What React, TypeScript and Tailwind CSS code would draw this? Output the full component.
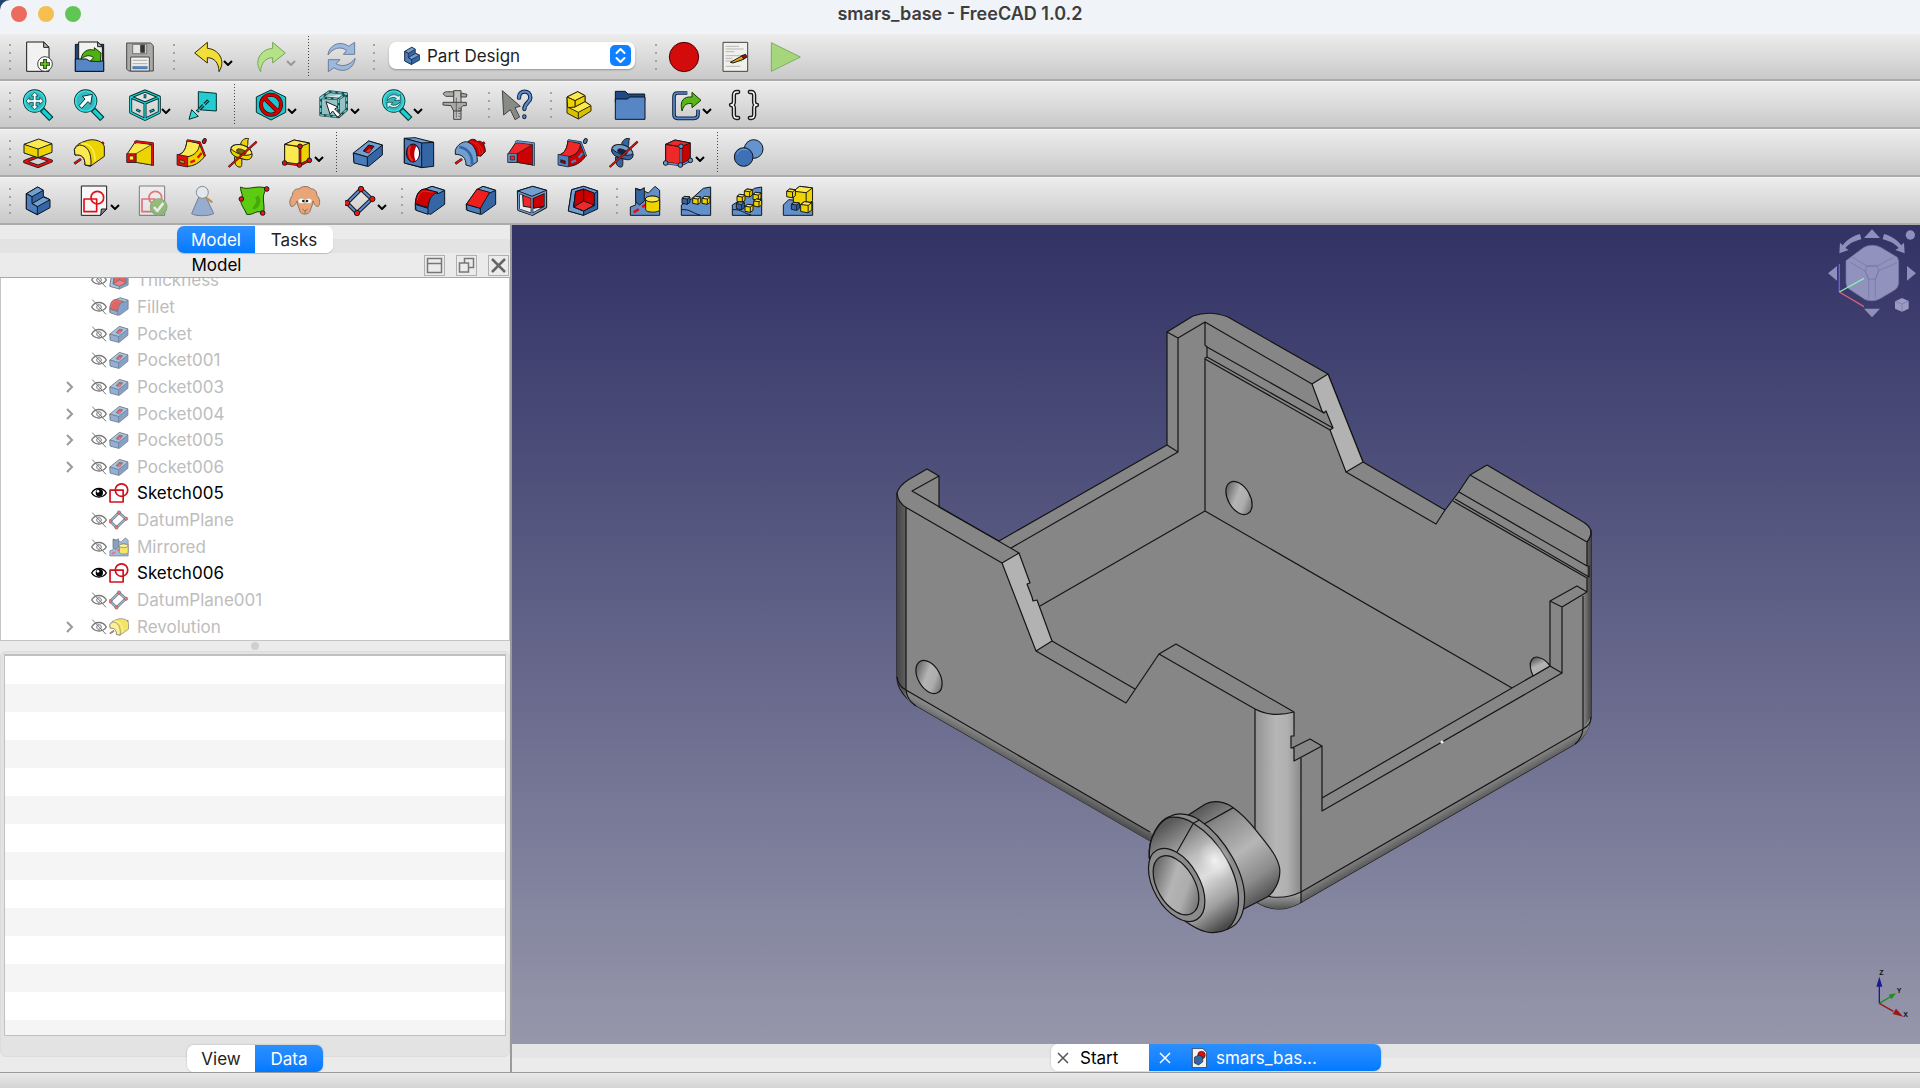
import React, { useState } from 'react';
import { Braces } from 'lucide-react';

type Tone = { base: string; light: string; dark: string };

const BLUE: Tone = { base: '#3465a4', light: '#729fcf', dark: '#1f4479' };
const YELLOW: Tone = { base: '#edd400', light: '#fce94f', dark: '#c4a000' };
const RED: Tone = { base: '#cc0000', light: '#ef2929', dark: '#8f0000' };
const INK = '#1a1a1a';

const Glyph: React.FC<{ children: React.ReactNode; size?: string }> = ({ children, size = 'size-8' }) => (
  <svg viewBox="0 0 96 96" className={`${size} shrink-0`} stroke={INK} strokeWidth="3" strokeLinejoin="round" fill="none" aria-hidden="true">
    {children}
  </svg>
);

/* ---------- shared icon parts ---------- */

const Body = () => (
  <g stroke="#0b1521">
    <path d="M13 26L47 6L64 16V34L84 44V68L46 89L13 72z" fill={BLUE.base} />
    <path d="M13 26L47 6L64 16L30 35z" fill={BLUE.light} />
    <path d="M30 56L64 36L84 44L46 65z" fill={BLUE.light} />
    <path d="M13 26L30 35V56L46 65V89L13 72z" fill="#4d7fbd" />
  </g>
);

const Stairs = () => (
  <g stroke="#302b00">
    <path d="M12 24L44 8L66 20V38L84 50V66L46 90L12 72z" fill="#d9c000" />
    <path d="M12 24L44 8L66 20L36 35z" fill={YELLOW.light} />
    <path d="M36 35L66 20V38L36 54z" fill={YELLOW.base} />
    <path d="M14 54L36 54L66 38L84 50L46 70z" fill={YELLOW.light} />
    <path d="M12 24L36 35V54L14 56z" fill={YELLOW.base} />
    <path d="M46 70V90" />
  </g>
);

const Lens = () => (
  <g>
    <path d="M60 62L88 90" stroke="#04302f" strokeWidth="18" />
    <path d="M62 64L86 88" stroke="#16d0d2" strokeWidth="11" />
    <circle cx="38" cy="36" r="30" fill="#a9ecec" stroke="#04302f" strokeWidth="10" />
    <circle cx="38" cy="36" r="30" fill="#37b7bd" stroke="#34e0e2" strokeWidth="5" />
  </g>
);

const CubeFrame = () => (
  <g>
    <path d="M48 6L91 24V70L48 91L5 70V24zM5 24L48 42L91 24M48 42V91" stroke="#04302f" strokeWidth="9" />
    <path d="M48 6L91 24V70L48 91L5 70V24zM5 24L48 42L91 24M48 42V91" stroke="#22d4d7" strokeWidth="4" />
  </g>
);

const Loft: React.FC<{ fill: Tone; edge: string }> = ({ fill, edge }) => (
  <g>
    <path d="M10 50L34 14L84 22V84L38 76L10 76z" fill={fill.light} />
    <path d="M36 50L84 22V84L36 76z" fill={fill.base} strokeWidth="2" />
    <path d="M32 18L36 14L86 20V86" stroke={INK} strokeWidth="8" />
    <path d="M32 18L36 14L86 20V86" stroke={edge} strokeWidth="5" />
    <path d="M8 50H36V76H8z" fill={edge} strokeWidth="2" />
    <path d="M16 57H29V69H16z" fill={fill.light} strokeWidth="2" />
  </g>
);

const Pipe: React.FC<{ fill: Tone; edge: string }> = ({ fill, edge }) => (
  <g>
    <path d="M8 54C28 50 34 30 36 10L74 20L90 56C76 78 54 88 36 88L10 84z" fill={fill.base} />
    <path d="M8 54C28 50 34 30 36 10L74 20C72 40 62 54 36 60z" fill={fill.light} />
    <path d="M36 10L74 16L90 58" stroke={INK} strokeWidth="7" />
    <path d="M36 10L74 16L90 58" stroke={edge} strokeWidth="4" />
    <path d="M6 52L38 58V90L6 84z" fill={edge} strokeWidth="2" />
    <path d="M14 68L28 72V80L14 76z" fill={fill.dark} strokeWidth="2" />
    <path d="M46 76L60 70M68 62L80 48" stroke={edge} strokeWidth="7" />
    <ellipse cx="88" cy="12" rx="5" ry="8" fill={edge} transform="rotate(25 88 12)" />
  </g>
);

const Helix: React.FC<{ fill: Tone; dark: string }> = ({ fill, dark }) => (
  <g>
    <path d="M44 22C46 8 58 2 68 5C62 14 70 22 60 34z" fill={fill.base} />
    <path d="M26 60C24 78 30 92 44 90C50 86 46 72 48 58z" fill={fill.base} />
    <ellipse cx="46" cy="44" rx="33" ry="20" fill={fill.light} transform="rotate(18 46 44)" />
    <path d="M16 36C30 50 60 62 78 50C80 66 66 72 52 66C36 62 18 58 14 42z" fill={fill.base} />
    <ellipse cx="46" cy="44" rx="15" ry="7" fill={dark} transform="rotate(18 46 44)" strokeWidth="2" />
    <path d="M8 90L92 14" stroke={INK} strokeWidth="7" />
    <path d="M8 90L92 14" stroke="#e01010" strokeWidth="4" />
  </g>
);

const Primitive: React.FC<{ fill: Tone; dot: string }> = ({ fill, dot }) => (
  <g>
    <path d="M8 22L36 9L82 18V68L54 86L8 76z" fill={fill.base} />
    <path d="M8 22L54 29V86L8 76z" fill={fill.light} />
    <path d="M8 22L36 9L82 18L54 29z" fill={fill.light} />
    <path d="M54 29V84M8 78L54 84L82 70" strokeWidth="8" />
    <path d="M54 29V84M8 78L54 84L82 70" stroke={dot} strokeWidth="4" />
    {[[54, 28], [8, 78], [52, 84], [82, 70]].map(([cx, cy]) => (
      <circle key={`${cx}-${cy}`} cx={cx} cy={cy} r="7" fill={dot} />
    ))}
  </g>
);

const Pocket = () => (
  <g stroke="#0b1521">
    <path d="M4 50L50 12L91 24V54L50 88L6 76z" fill={BLUE.base} />
    <path d="M4 48L50 12L91 24L46 60z" fill={BLUE.light} />
    <path d="M4 48L46 60V88L6 78z" fill="#4a7cba" />
    <path d="M34 42L50 24L66 28L50 48z" fill="#a40000" />
    <path d="M40 44L52 34L60 36L50 48z" fill="#ef2929" strokeWidth="1" />
  </g>
);

const Revolution: React.FC<{ groove?: boolean }> = ({ groove }) => (
  <g>
    <path d="M4 80L24 66M80 26L92 16" strokeWidth="8" />
    <path d="M4 80L24 66M80 26L92 16" stroke="#e01010" strokeWidth="5" />
    {groove ? (
      <g>
        <path d="M38 18C50 4 62 4 70 14C82 8 94 22 94 44L80 58L50 50z" fill={RED.base} />
        <path d="M50 14C68 18 80 36 78 54M64 16C78 24 86 36 86 50" stroke={RED.light} />
        <path d="M4 40C10 22 26 14 38 14C58 20 70 38 70 74L50 88L36 84C36 64 26 52 4 52z" fill={BLUE.light} />
        <path d="M16 30C42 34 56 54 54 82" stroke={BLUE.base} strokeWidth="8" />
      </g>
    ) : (
      <g>
        <path d="M4 38C10 22 20 18 44 10C66 4 92 14 94 30V58L52 88L36 84C36 62 28 52 6 54z" fill={YELLOW.base} />
        <path d="M4 38C8 30 12 26 20 24C44 26 56 46 54 86L36 84C36 62 28 52 6 54z" fill={YELLOW.light} />
        <path d="M24 20C50 18 66 36 66 72" stroke={YELLOW.light} strokeWidth="5" />
      </g>
    )}
  </g>
);

const Sketch: React.FC<{ page?: boolean }> = ({ page }) =>
  page ? (
    <g>
      <path d="M10 3H86V72L68 91H10z" fill="#f7f7f7" />
      <path d="M86 72H70L68 91z" fill="#8a8a8a" />
      <circle cx="58" cy="38" r="19" stroke="#e0101c" strokeWidth="5" />
      <path d="M18 42H56V80H18z" stroke="#e0101c" strokeWidth="5" />
    </g>
  ) : (
    <g stroke="#d0101c" strokeWidth="8">
      <circle cx="60" cy="34" r="30" />
      <path d="M5 34H68V91H5z" />
    </g>
  );

const Datum = () => (
  <g>
    <path d="M48 12L80 42L36 84L6 54z" strokeWidth="12" />
    <path d="M48 12L80 42L36 84L6 54z" stroke="#5b8bc9" strokeWidth="6" />
    {[[48, 12], [82, 42], [36, 84], [6, 54]].map(([cx, cy]) => (
      <circle key={`${cx}-${cy}`} cx={cx} cy={cy} r="8" fill="#f01414" />
    ))}
  </g>
);

const Fillet = () => (
  <g stroke="#0b1521">
    <path d="M4 56C6 30 14 14 34 12L54 4L92 16V58L50 88L4 74z" fill={BLUE.base} />
    <path d="M34 12L54 4L92 16L72 26z" fill={BLUE.light} />
    <path d="M4 58L42 70V88L6 76z" fill="#4a7cba" />
    <path d="M4 56C6 30 14 12 34 12L72 22C54 26 44 44 42 68z" fill={RED.base} />
    <path d="M10 46C12 30 20 18 34 18L56 22" stroke={RED.light} />
  </g>
);

const Chamfer = () => (
  <g stroke="#0b1521">
    <path d="M4 58L36 14L54 4L92 16V58L50 88L4 74z" fill={BLUE.base} />
    <path d="M36 14L54 4L92 16L74 24z" fill={BLUE.light} />
    <path d="M4 58L46 70V88L6 76z" fill="#4a7cba" />
    <path d="M4 58L36 12L74 22L46 70z" fill="#ef1f1f" />
  </g>
);

const Draft = () => (
  <g stroke="#0b1521">
    <path d="M4 18L50 4L92 16V68L50 91L6 76z" fill="#e9e9e9" />
    <path d="M20 30L48 38L86 24V66L50 68L22 64z" fill={RED.light} />
    <path d="M52 36L86 24V64L52 70z" fill="#c00" />
    <path d="M4 18L50 4L92 16L48 34z" fill={BLUE.light} />
    <path d="M8 22L48 38L90 20M8 22V74L48 88L88 66V22M48 38V88" stroke={INK} strokeWidth="8" />
    <path d="M8 22L48 38L90 20M8 22V74L48 88L88 66V22M48 38V88" stroke={BLUE.light} strokeWidth="4" />
  </g>
);

const Thickness = () => (
  <g stroke="#0b1521">
    <path d="M14 14L50 4L92 18V72L50 91L4 78z" fill={BLUE.base} />
    <path d="M14 14L50 4L92 18L82 26L50 14L26 20L20 66L50 78V91L4 78z" fill={BLUE.light} />
    <path d="M26 20L50 12L82 24V62L50 78L20 66z" fill={RED.base} />
    <path d="M26 20L50 12V48L20 66z" fill="#c80000" />
    <path d="M50 48L82 60L50 78L20 66z" fill={RED.light} />
  </g>
);

const Ground = () => <path d="M4 60L34 42L70 10L92 6V91H4zM6 74C30 72 40 86 60 90" fill="#6390ca" stroke="#0b1521" />;

const MiniCube: React.FC<{ x: number; y: number; s: number; tone: Tone }> = ({ x, y, s, tone }) => (
  <g transform={`translate(${x} ${y}) scale(${s})`} strokeWidth={3 / s}>
    <path d="M0 6L8 0L24 2V18L16 24L0 21z" fill={tone.base} />
    <path d="M0 6L8 0L24 2L16 8z" fill={tone.light} />
    <path d="M16 8V24" />
  </g>
);

const Mirrored = () => (
  <g>
    <path d="M4 66L20 60V10L40 16L58 24L78 4L92 16V91H4z" fill="#6390ca" />
    <path d="M20 10L32 16L46 8V48L32 60L20 50z" fill={BLUE.base} />
    <path d="M14 82L92 34" stroke="#e01010" strokeWidth="8" strokeDasharray="18 12" />
    <path d="M50 44C50 30 92 30 92 44V74C92 84 50 84 50 74z" fill={YELLOW.base} />
    <ellipse cx="70" cy="42" rx="21" ry="9" fill={YELLOW.light} />
  </g>
);

/* ---------- toolbar icons ---------- */

const NewDoc = () => (
  <g>
    <path d="M14 3H65L81 19V91H14z" fill="#f2f2f2" />
    <path d="M65 3V19H81z" fill="#bbb" />
    <circle cx="69" cy="69" r="22" fill="#fff" stroke="#444" />
    <path d="M69 54V84M54 69H84" stroke="#173b00" strokeWidth="11" />
    <path d="M69 56V82M56 69H82" stroke="#6ed41c" strokeWidth="5" />
  </g>
);

const OpenDoc = () => (
  <g>
    <path d="M7 10H92V91H7z" fill="#1f4479" stroke="#0b1521" />
    <path d="M17 3H74L88 17V70H17z" fill="#f2f2f2" />
    <path d="M74 3V17H88z" fill="#bbb" />
    <path d="M7 54H40L50 60H92V91H7z" fill="#5686c4" stroke="#0b1521" />
    <path d="M24 54C28 30 46 22 64 28V20L84 36L82 62L52 60L62 50C50 40 36 44 24 54z" fill="#4fb012" stroke="#173b00" />
  </g>
);

const SaveDoc = () => (
  <g stroke="#4a4a4a">
    <path d="M8 6H80L88 14V90H14L8 84z" fill="#a9aba6" />
    <path d="M26 10H68V38H26z" fill="#e6e6e6" strokeWidth="2" />
    <path d="M50 12H62V34H50z" fill="#333" />
    <path d="M20 48H76V90H20z" fill="#f0f0ee" />
    <path d="M26 58H70M26 68H70" stroke="#aaa" />
    <path d="M26 76H70V84H26z" fill="#4a86d8" strokeWidth="1" />
  </g>
);

const Undo = () => (
  <path d="M11 36L49 4V22C82 24 106 58 84 92C84 66 70 50 49 50V66z" fill="#f2de3a" stroke="#302b00" />
);

const Redo = () => (
  <path d="M94 36L56 4V22C22 24 -2 58 20 92C20 66 36 50 56 50V66z" fill="#b3e386" stroke="#79a35a" />
);

const Refresh = () => (
  <g fill="#9db9de" stroke="#6a7c96">
    <path d="M12 42C14 14 46 -4 74 16L92 4V40H58L68 28C48 14 26 22 12 42z" />
    <path d="M93 52C92 80 60 100 30 80L13 92V56H48L36 68C56 80 80 72 93 52z" />
  </g>
);

const Macro = () => (
  <g>
    <path d="M12 4H86V91H12z" fill="#f0f0ec" strokeWidth="3" stroke="#444" />
    <path d="M20 16H60M20 24H74M20 32H46M20 44H78M20 52H40M20 60H70M20 76H64" stroke="#999" strokeWidth="2" />
    <path d="M34 64L70 44L80 48L76 54L42 66z" fill="#e2a800" />
    <path d="M68 44L80 40L84 48L74 54z" fill="#c00" />
  </g>
);

const FitAll = () => (
  <g>
    <Lens />
    <path transform="translate(2 0)" d="M36 10L46 21H40V32H51V26L62 36L51 46V40H40V51H46L36 62L26 51H32V40H21V46L10 36L21 26V32H32V21H26z" fill="#f3ffff" stroke="#04302f" strokeWidth="2" />
  </g>
);

const FitSel = () => (
  <g>
    <Lens />
    <path d="M18 50L36 30L28 22L58 16L53 46L45 38L26 58z" fill="#f3ffff" stroke="#04302f" />
  </g>
);

const IsoView = () => (
  <g>
    <CubeFrame />
    <path d="M48 16V28M22 62L34 68M62 68L76 62" stroke="#04302f" strokeWidth="8" />
    <path d="M48 18V26M24 63L32 67M64 67L74 63" stroke="#22c4c7" strokeWidth="3" />
  </g>
);

const AlignView = () => (
  <g stroke="#04302f">
    <path d="M34 8L88 13V66L34 62z" fill="#22ccd0" />
    <path d="M64 34L30 68" strokeWidth="10" strokeDasharray="16 5" />
    <path d="M62 36L30 68" stroke="#37d8da" strokeWidth="3" />
    <path d="M6 91L14 62L34 82z" fill="#37d8da" />
  </g>
);

const DrawStyle = () => (
  <g>
    <path d="M48 3L92 24V70L48 93L4 70V24z" fill="#1cc6cb" stroke="#04302f" />
    <circle cx="48" cy="47" r="30" stroke="#3b0000" strokeWidth="12" />
    <path d="M27 26L69 68" stroke="#3b0000" strokeWidth="13" />
    <circle cx="48" cy="47" r="30" stroke="#d40000" strokeWidth="8" />
    <path d="M27 26L69 68" stroke="#d40000" strokeWidth="9" />
  </g>
);

const BoxSelect = () => (
  <g>
    <path d="M8 26L34 8L86 14V62L62 84L8 78zM8 26L62 30L86 14M62 30V84" fill="#6db1b4" fillOpacity=".6" stroke="#17494b" strokeWidth="8" />
    <path d="M8 26L34 8L86 14V62L62 84L8 78zM8 26L62 30L86 14M62 30V84" stroke="#6cc6c8" strokeWidth="4" strokeDasharray="12 7" />
    <path d="M24 38L60 54L50 60L68 78L58 84L44 66L36 76z" fill="#fff" />
  </g>
);

const SyncView = () => (
  <g>
    <Lens />
    <path transform="translate(2 0)" d="M16 34C20 18 38 12 50 22L56 16V34H38L44 28C36 22 26 26 16 34zM56 38C54 56 34 60 24 52L16 58V40H34L28 46C36 52 48 48 56 38z" fill="#d7f5f5" stroke="#04302f" strokeWidth="2" />
  </g>
);

const Measure = () => (
  <g stroke="#444" fill="#a8aaa4">
    <path d="M44 5H66V91H44z" fill="#c2c4be" />
    <path d="M12 14C20 4 30 10 44 8V22H20zM66 12L84 16L82 24H66z" />
    <path d="M12 40H82V50H72L66 56V66H44L36 50L12 48z" />
    <path d="M52 26V86M58 58H64M58 66H64M58 74H64M58 82H64" strokeWidth="2" />
  </g>
);

const WhatsThis = () => (
  <g>
    <path d="M4 5L58 52L42 56L56 84L42 92L28 62L8 78z" fill="#888a85" stroke="#444" />
    <g strokeLinecap="round">
      <path d="M54 26C54 2 88 2 88 26C88 40 70 42 70 60M70 82V84" stroke="#10233f" strokeWidth="13" />
      <path d="M54 26C54 2 88 2 88 26C88 40 70 42 70 60M70 82V84" stroke="#5b8bc9" strokeWidth="7" />
    </g>
  </g>
);

const Group = () => (
  <g stroke="#0b1521">
    <path d="M4 7H34L42 15H92V40H4z" fill="#204a87" />
    <path d="M4 30H40L48 24H93V91H4z" fill="#5686c4" />
  </g>
);

const LinkMake = () => (
  <g>
    <path d="M52 12H22C16 12 12 16 12 24V76C12 84 16 88 22 88H72C80 88 84 84 84 76V62" stroke="#10233f" strokeWidth="11" />
    <path d="M52 12H22C16 12 12 16 12 24V76C12 84 16 88 22 88H72C80 88 84 84 84 76V62" stroke="#5b8bc9" strokeWidth="5" />
    <path d="M36 66C28 34 42 22 66 24V10L93 34L66 56V44C50 42 42 46 36 66z" fill="#59b51a" stroke="#173b00" />
  </g>
);

const Expression = () => (
  <g>
    <Braces x="-4" y="-4" width="104" height="104" stroke={INK} strokeWidth={3} />
    <Braces x="-4" y="-4" width="104" height="104" stroke="#fff" strokeWidth={1} />
  </g>
);

const Pad = () => (
  <g>
    <path d="M8 74L47 58L88 72L48 88z" stroke={INK} strokeWidth="10" />
    <path d="M8 74L47 58L88 72L48 88z" stroke="#d81414" strokeWidth="6" />
    <path d="M6 22V48L48 62L90 46V20z" fill={YELLOW.base} />
    <path d="M6 22L50 6L90 20L48 36z" fill={YELLOW.light} />
    <path d="M48 36V62" />
  </g>
);

const Hole = () => (
  <g stroke="#0b1521">
    <path d="M4 4L56 14L92 16V88L56 92L4 78z" fill={BLUE.base} />
    <path d="M4 4L36 2L92 16L56 18z" fill={BLUE.light} />
    <path d="M4 4L56 18V91L4 78z" fill="#4a7cba" />
    <ellipse cx="30" cy="48" rx="20" ry="27" fill="#c00000" />
    <path d="M40 28C52 40 50 62 38 72C32 60 32 42 40 28z" fill="#fff" stroke="none" />
    <path d="M22 26C12 44 20 66 30 72" stroke={RED.light} strokeWidth="6" />
  </g>
);

const Boolean2 = () => (
  <g stroke="#0b1521">
    <circle cx="62" cy="36" r="28" fill="#6593ce" />
    <circle cx="32" cy="60" r="28" fill="#3d70b4" />
    <path d="M12 52C18 36 34 34 44 40" stroke="#7ba6dc" />
  </g>
);

const Validate = () => (
  <g opacity=".5">
    <path d="M10 3H86V91H10z" fill="#f7f7f7" />
    <circle cx="58" cy="38" r="19" stroke="#e0101c" strokeWidth="5" />
    <path d="M18 42H56V80H18z" stroke="#e0101c" strokeWidth="5" />
    <circle cx="68" cy="66" r="25" fill="#4fa020" stroke="#3b7a18" />
    <path d="M54 66L64 78L82 54" stroke="#fff" strokeWidth="8" />
  </g>
);

const CheckGeometry = () => (
  <g stroke="#6f7f93">
    <path d="M36 34L14 86C26 94 64 94 80 86L56 34z" fill="#96add0" />
    <path d="M54 36L76 52" stroke="#b8925c" strokeWidth="7" />
    <circle cx="46" cy="22" r="18" fill="#e3e8ee" stroke="#8b8b8b" />
  </g>
);

const Binder = () => (
  <g>
    <path d="M8 6C30 18 56 -2 86 10C66 36 84 60 76 86C56 70 48 92 26 88C20 70 4 56 10 44C18 30 6 20 8 6z" fill="#5ccb12" stroke="#173b00" />
    <path d="M56 34C68 50 54 70 46 66" stroke="#47a80c" strokeWidth="12" />
    {[[86, 12], [10, 42], [74, 84]].map(([cx, cy]) => (
      <circle key={`${cx}-${cy}`} cx={cx} cy={cy} r="7" fill="#f01414" />
    ))}
  </g>
);

const Clone = () => (
  <g stroke="#8a7460">
    <path d="M30 12C38 2 60 2 66 12C78 10 84 22 84 32C94 42 94 54 88 64C80 66 76 58 72 48C72 60 66 66 64 76C62 90 34 92 32 76C30 66 24 60 24 48C20 58 14 66 6 64C0 54 2 42 10 32C10 20 18 10 30 12z" fill="#e9a577" />
    <ellipse cx="38" cy="48" rx="11" ry="8" fill="#fff" strokeWidth="1" />
    <ellipse cx="58" cy="48" rx="11" ry="8" fill="#fff" strokeWidth="1" />
    <circle cx="43" cy="48" r="4" fill="#222" stroke="none" />
    <circle cx="54" cy="48" r="4" fill="#222" stroke="none" />
    <path d="M40 72L48 78L56 72M48 78V86" />
  </g>
);

const Linear = () => (
  <g>
    <Ground />
    <MiniCube x={6} y={34} s={1} tone={BLUE} />
    <MiniCube x={38} y={34} s={1} tone={YELLOW} />
    <MiniCube x={66} y={34} s={1} tone={YELLOW} />
  </g>
);

const Polar = () => (
  <g>
    <Ground />
    {[[40, 12], [66, 22], [18, 28], [68, 42], [42, 58]].map(([x, y]) => (
      <MiniCube key={`${x}-${y}`} x={x} y={y} s={1} tone={YELLOW} />
    ))}
    <MiniCube x={16} y={50} s={1} tone={BLUE} />
  </g>
);

const Multi = () => (
  <g>
    <path d="M4 60L20 44L92 50V91H4z" fill="#6390ca" />
    <MiniCube x={34} y={4} s={2.4} tone={YELLOW} />
    <MiniCube x={14} y={12} s={1.1} tone={YELLOW} />
    <MiniCube x={56} y={50} s={1.4} tone={YELLOW} />
    <MiniCube x={28} y={52} s={1} tone={BLUE} />
  </g>
);

/* ---------- toolbar building blocks ---------- */

const Tool: React.FC<{ name: string; menu?: boolean; faded?: boolean; children: React.ReactNode }> = ({ name, menu, faded, children }) => (
  <button aria-label={name} className={`flex h-full shrink-0 items-center ${menu ? 'w-[63px] pl-[15px]' : 'w-[51px] justify-center'}`}>
    <Glyph>{children}</Glyph>
    {menu && (
      <svg viewBox="0 0 10 6" className={`mt-3 h-[6px] w-[10px] shrink-0 ${faded ? 'text-[#999]' : 'text-black'}`} fill="none" stroke="currentColor" strokeWidth="2">
        <path d="M1 1l4 4 4-4" />
      </svg>
    )}
  </button>
);

const Handle = () => (
  <div className="flex w-[11px] shrink-0 flex-col items-end justify-center gap-[6px] pr-px">
    {[0, 1, 2, 3].map((i) => (
      <span key={i} className="size-[2px] rounded-full bg-[#8f8f8f]" />
    ))}
  </div>
);

const Sep = () => (
  <div className="flex w-3 shrink-0 justify-center py-px">
    <span className="w-px bg-[repeating-linear-gradient(#444_0_1px,transparent_1px_3px)]" />
  </div>
);

const Bar: React.FC<{ children: React.ReactNode }> = ({ children }) => (
  <div className="flex h-12 shrink-0 border-t border-b-2 border-t-[#f4f4f4] border-b-[#ababab] bg-gradient-to-b from-[#ededed] to-[#c9c9c9] pt-px pl-px">
    {children}
  </div>
);

const TREE = [
  { name: 'Thickness', icon: <Thickness /> },
  { name: 'Fillet', icon: <Fillet /> },
  { name: 'Pocket', icon: <Pocket /> },
  { name: 'Pocket001', icon: <Pocket /> },
  { name: 'Pocket003', icon: <Pocket />, expandable: true },
  { name: 'Pocket004', icon: <Pocket />, expandable: true },
  { name: 'Pocket005', icon: <Pocket />, expandable: true },
  { name: 'Pocket006', icon: <Pocket />, expandable: true },
  { name: 'Sketch005', icon: <Sketch />, visible: true },
  { name: 'DatumPlane', icon: <Datum /> },
  { name: 'Mirrored', icon: <Mirrored /> },
  { name: 'Sketch006', icon: <Sketch />, visible: true },
  { name: 'DatumPlane001', icon: <Datum /> },
  { name: 'Revolution', icon: <Revolution />, expandable: true },
];

const Eye: React.FC<{ on?: boolean }> = ({ on }) => (
  <svg viewBox="0 0 48 48" className="size-4 shrink-0" fill="none" stroke={on ? '#000' : '#777'} strokeWidth="4">
    <path d="M2 24C12 6 36 6 46 24C36 40 12 40 2 24z" />
    {on ? (
      <g>
        <circle cx="25" cy="23" r="9" fill="#000" />
        <circle cx="21" cy="19" r="4" fill="#fff" stroke="none" />
      </g>
    ) : (
      <g strokeWidth="3">
        <circle cx="24" cy="24" r="7" />
        <path d="M4 2L45 46" />
      </g>
    )}
  </svg>
);

/* ---------- 3D view ---------- */

const Part = () => (
  <svg viewBox="512 225 1408 819" className="absolute inset-0 size-full" fill="none" stroke="#151515" strokeWidth="1.2" strokeLinejoin="round" aria-label="smars_base part">
    <defs>
      <linearGradient id="left"><stop stopColor="#444" /><stop offset="1" stopColor="#868686" /></linearGradient>
      <linearGradient id="right"><stop stopColor="#868686" /><stop offset="1" stopColor="#444" /></linearGradient>
      <linearGradient id="post"><stop stopColor="#929292" /><stop offset=".45" stopColor="#b6b6b6" /><stop offset=".7" stopColor="#b0b0b0" /><stop offset="1" stopColor="#8a8a8a" /></linearGradient>
      <linearGradient id="foot" x2="0" y2="1"><stop stopColor="#adadad" /><stop offset="1" stopColor="#555" /></linearGradient>
      <linearGradient id="edgeL" x1="1030" y1="760" x2="1022" y2="775" gradientUnits="userSpaceOnUse"><stop stopColor="#868686" /><stop offset="1" stopColor="#404040" /></linearGradient>
      <linearGradient id="edgeR" x1="1440" y1="811" x2="1448" y2="825" gradientUnits="userSpaceOnUse"><stop stopColor="#868686" /><stop offset="1" stopColor="#404040" /></linearGradient>
      <linearGradient id="bore" x1=".2" y1="0" x2=".7" y2="1"><stop stopColor="#565656" /><stop offset=".45" stopColor="#b4b4b4" /><stop offset=".7" stopColor="#adadad" /><stop offset="1" stopColor="#6e6e6e" /></linearGradient>
      <linearGradient id="barrel" x1=".1" y1="0" x2=".7" y2="1"><stop stopColor="#4a4a4a" /><stop offset=".25" stopColor="#8a8a8a" /><stop offset=".55" stopColor="#b6b6b6" /><stop offset=".8" stopColor="#8c8c8c" /><stop offset="1" stopColor="#4e4e4e" /></linearGradient>
      <linearGradient id="cone" x1="130" y1="640" x2="330" y2="930" gradientUnits="userSpaceOnUse"><stop stopColor="#5a5a5a" /><stop offset=".35" stopColor="#bcbcbc" /><stop offset=".55" stopColor="#dedede" /><stop offset=".8" stopColor="#a0a0a0" /><stop offset="1" stopColor="#4a4a4a" /></linearGradient>
      <radialGradient id="shine"><stop stopColor="#f2f2f2" /><stop offset="1" stopColor="#e0e0e0" stopOpacity="0" /></radialGradient>
    </defs>

    {/* silhouette */}
    <path fill="#868686" d="M927 469L939 476V507L999 541L1167 445V332L1193 316Q1210 310 1228 317L1328 374L1363 462L1445 510L1458 493L1470 475L1487 465L1580 520Q1591 526 1591 532V717Q1588 736 1575 744L1300 903Q1278 915 1258 903L915 705Q897 692 897 677V493Q899 486 908 480z" />

    {/* rounded edges */}
    <g stroke="none">
      <path fill="url(#left)" d="M897 494Q899 503 906 508V690L918 704Q897 692 897 677z" />
      <path fill="url(#right)" d="M1583 596L1587 592V542L1591 532V717Q1590 726 1583 731z" />
      <path fill="url(#edgeL)" d="M906 690L1150 832L1257 892V903L915 705Q904 700 906 690z" />
      <path fill="url(#edgeR)" d="M1301 892L1583 729L1591 717Q1589 736 1575 744L1300 903z" />
      <path fill="url(#post)" d="M1255 709Q1272 718 1294 712V736H1291V748H1294V761L1301 758V892Q1280 902 1255 893z" />
      <path fill="url(#foot)" d="M1255 893Q1280 902 1301 892L1300 903Q1278 915 1258 903z" />
    </g>

    {/* sloped end faces */}
    <path fill="#b2b2b2" d="M1328 374L1312 384L1322 411L1324 413L1326 411L1333 428L1330 430L1346 472L1363 462z" />
    <path fill="#b2b2b2" d="M1019 553L1002 563L1036 651L1052 641L1037 600L1033 601L1032 597L1027 584L1030 583z" />

    {/* back and left walls */}
    <path d="M1167 332L1178 338L1205 322L1312 384M1178 338V452M1167 445L1178 452L1011 548M1205 322V345L1207 347V357L1205 358V511L1040 606M1205 511L1512 688" />
    <path d="M1207 347L1324 413M1207 357L1333 428M1205 359L1330 430M1346 472L1436 524L1445 510" />
    <path d="M939 476L912 491L1019 553M897 493Q898 503 907 508L1002 563M906 508V690M897 677Q898 686 906 690L1150 832M906 690Q907 700 916 706" />
    <path d="M1052 641L1135 689M1036 651L1126 703L1159 654L1176 644L1294 712M1159 654L1255 709V893M1255 709Q1272 718 1294 712" />

    {/* right wall */}
    <path d="M1470 475L1587 542V566L1459 492M1587 542Q1592 536 1591 530M1587 566H1589V577L1455 499M1453 501L1587 578V592M1587 592L1577 586L1550 601L1562 607L1587 592M1550 601V666L1562 673V607M1583 596V729" />
    <path d="M1294 712V736H1291V748H1294V761L1322 746V811L1562 673M1292 748L1310 739L1322 746M1322 798L1550 666M1301 758V903M1255 893Q1280 902 1301 892L1583 729Q1591 725 1591 717M1583 729Q1582 738 1575 744" />
    <circle cx="1442" cy="742" r="1.6" fill="#eee" stroke="none" />

    {/* axle holes */}
    <ellipse cx="1239" cy="498" rx="11" ry="18" fill="url(#bore)" transform="rotate(-30 1239 498)" />
    <ellipse cx="929" cy="677" rx="11" ry="18" fill="url(#bore)" transform="rotate(-30 929 677)" />
    <path fill="url(#bore)" d="M1533 676C1526 660 1534 655 1540 658C1545 659 1548 663 1550 666z" />

    {/* wheel hub */}
    <g transform="translate(1110 620) scale(.3333)" strokeWidth="3.6">
      <path fill="url(#barrel)" d="M235 585L285 553C310 538 345 545 370 563C400 585 422 610 437 630C470 672 502 705 509 745C513 785 490 820 470 832L400 868z" />
      <path d="M370 563L282 612" />
      <path fill="#8b8b8b" d="M118 715C112 650 150 600 178 590C205 574 245 584 268 600C345 652 412 765 403 850C398 900 375 920 352 928z" />
      <path fill="url(#cone)" d="M118 715C114 650 150 602 178 592C215 590 232 598 250 610C330 660 392 765 385 855C382 890 370 912 352 928C305 952 262 930 225 903z" />
      <ellipse cx="315" cy="722" rx="48" ry="60" fill="url(#shine)" stroke="none" transform="rotate(-30 315 722)" />
      <path d="M250 610L201 696M250 610L268 600" />
      <ellipse cx="200" cy="795" rx="69" ry="120" fill="#8b8b8b" transform="rotate(-30 200 795)" />
      <ellipse cx="198" cy="796" rx="56" ry="97" fill="url(#bore)" transform="rotate(-30 198 796)" />
    </g>
  </svg>
);

const NavCube = () => (
  <svg viewBox="0 15 360 315" className="absolute top-0 right-0 h-[105px] w-[120px]" fill="#8f8fbc" stroke="#7474a4" strokeWidth="2" aria-label="Navigation cube">
    <path d="M138 122L192 82Q216 70 242 82L292 112Q298 122 296 140V190Q294 204 284 210L240 236Q216 248 194 238L146 206Q138 200 138 188z" fill="#9292be" />
    <path d="M158 112L200 138L232 138L280 112M150 126L196 154L206 178V238M226 236V178L236 152L292 128M200 138L196 154L206 178H226L236 152L232 138z" fill="none" />
    <g stroke="none">
      <path d="M216 28L240 54H192zM216 292L240 266H192zM84 160L111 138V182zM348 160L321 138V182z" />
      <circle cx="331" cy="45" r="14" />
      <path d="M180 42L184 58C160 64 146 72 136 84L146 90L118 100L120 68L128 76C142 58 158 48 180 42zM252 42L248 58C272 64 286 72 296 84L286 90L314 100L312 68L304 76C290 58 274 48 252 42z" />
      <path d="M285 244L306 234L326 243V266L306 275L285 266z" fill="#9a9ac4" />
    </g>
    <path d="M285 244L306 252L326 243M306 252V275" fill="none" />
    <path d="M118 132V216" stroke="#6262ee" strokeWidth="4" />
    <path d="M118 216L192 175" stroke="#8df0b0" strokeWidth="4" />
    <path d="M118 216L192 260" stroke="#d8607e" strokeWidth="4" />
  </svg>
);

const AxisCross = () => (
  <svg viewBox="0 0 240 270" className="absolute right-0 bottom-1 h-[90px] w-20" strokeWidth="4" aria-label="Axis cross">
    <g fontFamily="Liberation Sans, sans-serif" fontSize="21" fontWeight="700" fill="#111">
      <text x="118" y="76">Z</text>
      <text x="170" y="128">Y</text>
      <text x="190" y="200">X</text>
    </g>
    <path d="M118 160V105" stroke="#1b1b90" />
    <path d="M118 80L127 110H109z" fill="#1b1b90" />
    <path d="M118 160L150 141" stroke="#169016" />
    <path d="M168 130L154 148L146 134z" fill="#169016" />
    <path d="M118 160L160 184" stroke="#9c1717" />
    <path d="M190 200L158 192L168 176z" fill="#9c1717" />
  </svg>
);

const App: React.FC = () => {
  const [panel, setPanel] = useState<'Model' | 'Tasks'>('Model');
  const [props, setProps] = useState<'View' | 'Data'>('Data');

  const tab = (active: boolean) =>
    active ? 'bg-gradient-to-b from-[#2b90ff] to-[#007aff] text-white' : 'bg-white text-[#222]';

  return (
    <div className="flex h-screen flex-col overflow-hidden bg-[#ebebeb] font-['Inter',sans-serif] text-[17px] leading-6 text-black">
      <div className="bg-[#24436e]">
        <header className="relative flex h-[33px] items-center rounded-tl-[10px] bg-[#f0f4f8] pb-[5px]">
          <div className="absolute left-[11px] flex gap-[11px]">
            <button aria-label="Close window" className="size-4 rounded-full bg-[#ec6a5e]" />
            <button aria-label="Minimise window" className="size-4 rounded-full bg-[#f4bf4f]" />
            <button aria-label="Zoom window" className="size-4 rounded-full bg-[#61c554]" />
          </div>
          <h1 className="w-full text-center text-lg leading-6 font-semibold text-[#3d3d3d]">smars_base - FreeCAD 1.0.2</h1>
        </header>
      </div>

      <Bar>
        <Handle />
        <Tool name="New"><NewDoc /></Tool>
        <Tool name="Open"><OpenDoc /></Tool>
        <Tool name="Save"><SaveDoc /></Tool>
        <Handle />
        <Tool name="Undo" menu><Undo /></Tool>
        <Tool name="Redo" menu faded><Redo /></Tool>
        <Sep />
        <Tool name="Refresh"><Refresh /></Tool>
        <Handle />
        <label className="relative mr-3 ml-[13px] flex h-full w-[246px] shrink-0 items-center pb-[3px]">
          <span className="pointer-events-none absolute left-[13px]"><Glyph size="size-5"><Body /></Glyph></span>
          <select aria-label="Workbench" className="h-[27px] w-full appearance-none rounded-[7px] bg-white pl-[38px] text-[17px] leading-6 text-[#1f1f1f] shadow-[0_1px_2px_rgba(0,0,0,0.3)]">
            <option>Part Design</option>
          </select>
          <svg viewBox="0 0 21 21" className="pointer-events-none absolute right-[4px] size-[21px]" fill="none" stroke="#fff" strokeWidth="2" strokeLinecap="round" strokeLinejoin="round">
            <rect width="21" height="21" rx="5" fill="#0f80ff" stroke="none" />
            <path d="M6.500 8l4-4 4 4M6.500 13l4 4 4-4" />
          </svg>
        </label>
        <Handle />
        <Tool name="Record macro"><circle cx="48" cy="48" r="44" fill="#d40b0b" stroke="#4a0000" /></Tool>
        <Tool name="Macros"><Macro /></Tool>
        <Tool name="Execute macro"><path d="M4 5L91 48L4 91z" fill="#a5d67c" stroke="#7fae60" /></Tool>
      </Bar>

      <Bar>
        <Handle />
        <Tool name="Fit all"><FitAll /></Tool>
        <Tool name="Fit selection"><FitSel /></Tool>
        <Tool name="Standard views" menu><IsoView /></Tool>
        <Tool name="Align to selection"><AlignView /></Tool>
        <Sep />
        <Tool name="Draw style" menu><DrawStyle /></Tool>
        <Tool name="Box selection" menu><BoxSelect /></Tool>
        <Tool name="Sync view" menu><SyncView /></Tool>
        <Tool name="Measure"><Measure /></Tool>
        <Handle />
        <Tool name="What's this?"><WhatsThis /></Tool>
        <Handle />
        <Tool name="Create part"><Stairs /></Tool>
        <Tool name="Create group"><Group /></Tool>
        <Tool name="Make link" menu><LinkMake /></Tool>
        <Tool name="Variable set"><Expression /></Tool>
      </Bar>

      <Bar>
        <Handle />
        <Tool name="Pad"><Pad /></Tool>
        <Tool name="Revolution"><Revolution /></Tool>
        <Tool name="Additive loft"><Loft fill={YELLOW} edge="#e01010" /></Tool>
        <Tool name="Additive pipe"><Pipe fill={YELLOW} edge="#e01010" /></Tool>
        <Tool name="Additive helix"><Helix fill={YELLOW} dark="#7a6500" /></Tool>
        <Tool name="Additive primitive" menu><Primitive fill={YELLOW} dot="#e01010" /></Tool>
        <Sep />
        <Tool name="Pocket"><Pocket /></Tool>
        <Tool name="Hole"><Hole /></Tool>
        <Tool name="Groove"><Revolution groove /></Tool>
        <Tool name="Subtractive loft"><Loft fill={RED} edge="#6593ce" /></Tool>
        <Tool name="Subtractive pipe"><Pipe fill={RED} edge="#4f7fc0" /></Tool>
        <Tool name="Subtractive helix"><Helix fill={BLUE} dark="#10233f" /></Tool>
        <Tool name="Subtractive primitive" menu><Primitive fill={RED} dot="#6593ce" /></Tool>
        <Sep />
        <Tool name="Boolean"><Boolean2 /></Tool>
      </Bar>

      <Bar>
        <Handle />
        <Tool name="Create body"><Body /></Tool>
        <Tool name="Create sketch" menu><Sketch page /></Tool>
        <Tool name="Validate sketch"><Validate /></Tool>
        <Tool name="Check geometry"><CheckGeometry /></Tool>
        <Tool name="Sub-shape binder"><Binder /></Tool>
        <Tool name="Clone"><Clone /></Tool>
        <Tool name="Datum" menu><Datum /></Tool>
        <Handle />
        <Tool name="Fillet"><Fillet /></Tool>
        <Tool name="Chamfer"><Chamfer /></Tool>
        <Tool name="Draft"><Draft /></Tool>
        <Tool name="Thickness"><Thickness /></Tool>
        <Handle />
        <Tool name="Mirrored"><Mirrored /></Tool>
        <Tool name="Linear pattern"><Linear /></Tool>
        <Tool name="Polar pattern"><Polar /></Tool>
        <Tool name="Multi-transform"><Multi /></Tool>
      </Bar>

      <div className="flex min-h-0 flex-1">
        {/* combo view */}
        <aside className="flex w-[512px] shrink-0 flex-col border-r-2 border-[#9b9b9b]">
          <div className="flex h-7 shrink-0 justify-center bg-gradient-to-b from-[#ebebeb] from-50% to-[#e3e3e3] to-50% pt-px">
            <div className="flex h-[27px] overflow-hidden rounded-[7px] shadow-[0_1px_1px_rgba(0,0,0,0.2)]">
              {(['Model', 'Tasks'] as const).map((t) => (
                <button key={t} onClick={() => setPanel(t)} className={`w-[78px] ${tab(panel === t)}`}>{t}</button>
              ))}
            </div>
          </div>

          <div className="flex h-[25px] shrink-0 items-center gap-[11px] border-b border-[#a8a8a8] pr-px pl-5">
            <h2 className="flex-1 text-center">{panel}</h2>
            <button aria-label="Toggle overlay" className="size-[21px] border border-[#b0b0b0]">
              <svg viewBox="0 0 19 19" fill="none" stroke="#777" strokeWidth="1.500"><path d="M2.500 2.500h14v14h-14zM2.500 7.500h14" /></svg>
            </button>
            <button aria-label="Float panel" className="size-[21px] border border-[#b0b0b0]">
              <svg viewBox="0 0 19 19" fill="none" stroke="#777" strokeWidth="1.500"><path d="M2.500 7h9v9h-9zM7.500 7V2.500h9v9h-5" /></svg>
            </button>
            <button aria-label="Close panel" className="size-[21px] border border-[#b0b0b0]">
              <svg viewBox="0 0 19 19" fill="none" stroke="#666" strokeWidth="2.500"><path d="M3 3l13 13M16 3L3 16" /></svg>
            </button>
          </div>

          <div className="flex h-[363px] shrink-0 flex-col justify-end overflow-hidden border-x border-b border-[#c4c4c4] bg-white">
            <ul className="grid h-[373px] shrink-0 auto-rows-fr">
              {TREE.map((item) => (
                <li key={item.name} className="flex items-center pl-[65px]">
                  <svg viewBox="0 0 8 12" className="mr-[17px] h-3 w-2 shrink-0" fill="none" stroke="#999" strokeWidth="2">
                    {item.expandable && <path d="M1 1l5 5-5 5" />}
                  </svg>
                  <Eye on={item.visible} />
                  <span className={`ml-[2px] flex items-center gap-2 ${item.visible ? '' : 'text-[#bdbdbd]'}`}>
                    <span className={item.visible ? '' : 'opacity-60'}><Glyph size="size-5">{item.icon}</Glyph></span>
                    {item.name}
                  </span>
                </li>
              ))}
            </ul>
          </div>

          <div className="flex h-[10px] shrink-0 items-center justify-center">
            <span className="size-2 rounded-full bg-[#d0d0d0]" />
          </div>

          <div className="flex min-h-0 flex-1 flex-col rounded-md border border-[#dcdcdc] bg-[#e3e3e3] px-[3px] pt-[2px]">
            <div className="flex-1 overflow-hidden border border-t-2 border-[#c0c0c0] bg-white">
              {Array.from({ length: 14 }, (_, i) => (
                <div key={i} className={`h-7 ${i % 2 ? 'bg-[#f4f5f4]' : 'bg-white'}`} />
              ))}
            </div>
            <div className="h-5 shrink-0" />
          </div>
          <div className="-mt-3 flex h-[27px] shrink-0 justify-center">
            <div className="flex overflow-hidden rounded-[7px] shadow-[0_0_2px_rgba(0,0,0,0.25)]">
              {(['View', 'Data'] as const).map((t) => (
                <button key={t} onClick={() => setProps(t)} className={`w-[68px] ${tab(props === t)}`}>{t}</button>
              ))}
            </div>
          </div>
        </aside>

        <main className="flex min-w-0 flex-1 flex-col">
          <div className="relative flex-1 bg-gradient-to-b from-[#323265] to-[#9797ab]">
            <Part />
            <NavCube />
            <AxisCross />
          </div>
          <div className="flex h-7 shrink-0 justify-center bg-gradient-to-b from-[#e5e5e5] from-50% to-[#ebebeb] to-50%">
            <div className="flex h-[27px] overflow-hidden rounded-[7px] shadow-[0_0_2px_rgba(0,0,0,0.25)]">
              <button className="flex w-[98px] items-center gap-[11px] bg-white pl-[6px]">
                <svg viewBox="0 0 12 12" className="size-3" stroke="#555" strokeWidth="1.500"><path d="M1 1l10 10M11 1L1 11" /></svg>
                Start
              </button>
              <button className="flex w-[232px] items-center bg-gradient-to-b from-[#2b90ff] to-[#007aff] pl-[10px] text-white">
                <svg viewBox="0 0 12 12" className="mr-[18px] size-3" stroke="#fff" strokeWidth="1.500"><path d="M1 1l10 10M11 1L1 11" /></svg>
                <span className="mr-[7px]">
                  <Glyph size="size-5">
                    <path d="M16 2H66L84 20V94H16z" fill="#f2f2f2" />
                    <circle cx="60" cy="34" r="18" fill="#e01010" />
                    <path d="M26 44L48 34L66 42V66L46 82L26 72z" fill={BLUE.base} />
                  </Glyph>
                </span>
                smars_bas...
              </button>
            </div>
          </div>
        </main>
      </div>

      <footer className="h-4 shrink-0 border-t border-[#9a9a9a] bg-gradient-to-b from-[#e8e8e8] to-[#d4d4d4]" />
    </div>
  );
};

export default App;
